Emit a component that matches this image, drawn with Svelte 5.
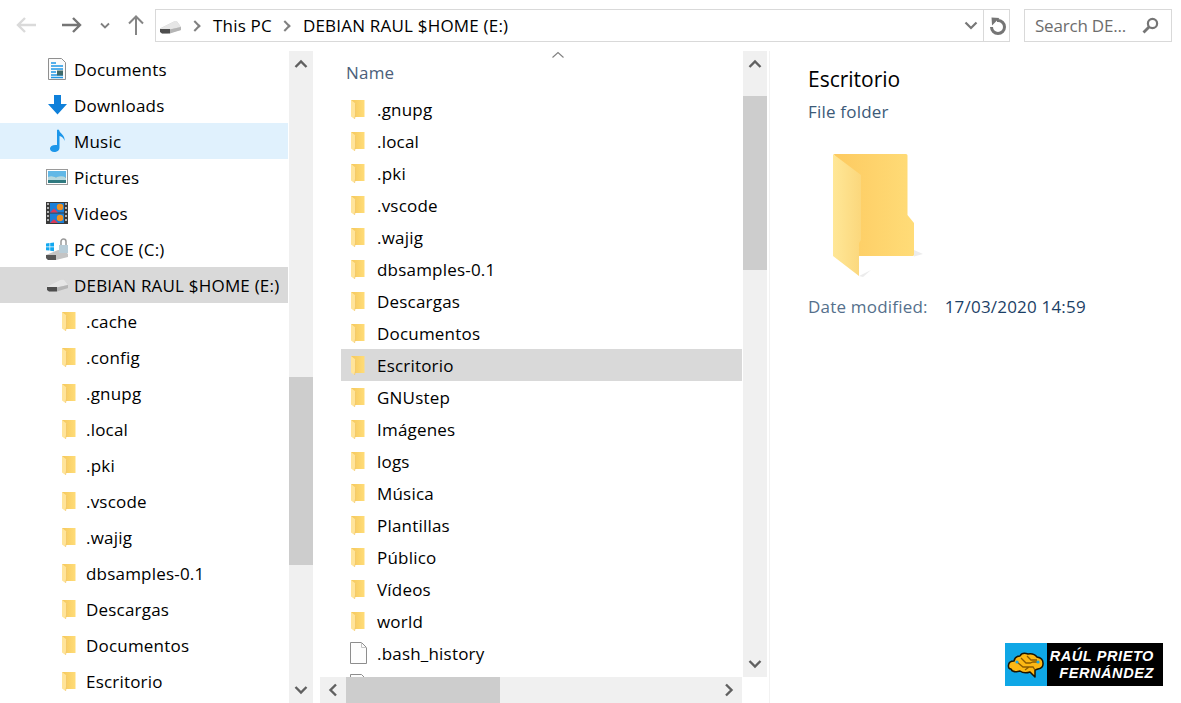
<script>
  const tree = ['.cache', '.config', '.gnupg', '.local', '.pki', '.vscode', '.wajig', 'dbsamples-0.1', 'Descargas', 'Documentos', 'Escritorio'];
  const folders = ['.gnupg', '.local', '.pki', '.vscode', '.wajig', 'dbsamples-0.1', 'Descargas', 'Documentos', 'Escritorio', 'GNUstep', 'Imágenes', 'logs', 'Música', 'Plantillas', 'Público', 'Vídeos', 'world'];
</script>

{#snippet folder()}
  <svg class="folder" width="16" height="21" viewBox="0 0 16 21">
    <defs>
      <linearGradient id="fb" x1="0" x2="1" y1="0" y2="0">
        <stop offset="0" stop-color="#f5c85c" />
        <stop offset="1" stop-color="#ffdc78" />
      </linearGradient>
    </defs>
    <path d="M1 1h13.500v17H4z" fill="url(#fb)" />
    <path d="M1 1l4.500 3.500v11.500L4.500 20 1 17.500z" fill="#ffe49a" />
    <path d="M5.500 4.500v11.500L4.500 20" fill="none" stroke="#efc05c" stroke-width=".6" />
  </svg>
{/snippet}

{#snippet chevUp()}
  <svg width="14" height="10" viewBox="0 0 14 10"><path d="M1.500 8L7 2.500 12.500 8" fill="none" stroke="#606060" stroke-width="2.400" /></svg>
{/snippet}

{#snippet chevDown()}
  <svg width="14" height="10" viewBox="0 0 14 10"><path d="M1.500 2L7 7.500 12.500 2" fill="none" stroke="#606060" stroke-width="2.400" /></svg>
{/snippet}

{#snippet drive()}
  <svg width="23" height="14" viewBox="0 0 23 14">
    <path d="M1 8.500L15 1.500h3L22 7v3L8 13.500H3L1 11z" fill="#c9c9c9" />
    <path d="M1 8.500L15 1.500h3L22 7 8 10H2z" fill="#e6e6e6" />
    <path d="M1 9h10v4.500H3L1 12z" fill="#4e4e4e" />
    <path d="M11 9.500l11-2.500v3L11 13.500z" fill="#b5b5b5" />
  </svg>
{/snippet}

<div class="window">
  <header class="toolbar">
    <div class="nav">
      <svg width="22" height="18" viewBox="0 0 22 18"><path d="M21 9H3M10 2L3 9l7 7" fill="none" stroke="#dadada" stroke-width="2.400" /></svg>
      <svg class="fwd" width="22" height="18" viewBox="0 0 22 18"><path d="M1 9h18M12 2l7 7-7 7" fill="none" stroke="#757575" stroke-width="2.400" /></svg>
      <svg class="hist" width="10" height="7" viewBox="0 0 10 7"><path d="M1 1.500l4 4 4-4" fill="none" stroke="#808080" stroke-width="1.800" /></svg>
      <svg class="up" width="18" height="22" viewBox="0 0 18 22"><path d="M9 21V3M2 9.500L9 2.500l7 7" fill="none" stroke="#858585" stroke-width="2" /></svg>
    </div>
    <div class="address">
      <span class="drive-icon">{@render drive()}</span>
      <span class="crumb-sep"></span>
      <span class="crumb">This PC</span>
      <span class="crumb-sep"></span>
      <span class="crumb">DEBIAN RAUL $HOME (E:)</span>
      <span class="addr-down">
        <svg width="14" height="9" viewBox="0 0 14 9"><path d="M1.500 1.500L7 7l5.500-5.500" fill="none" stroke="#777" stroke-width="2.200" /></svg>
      </span>
      <span class="refresh">
        <svg width="18" height="20" viewBox="0 0 18 20"><path d="M8 4.500h1a6.500 6.500 0 1 1-6.500 6.500" fill="none" stroke="#757575" stroke-width="3" /><path d="M2.500 1.500l8 .5-7.500 7.500z" fill="#757575" /></svg>
      </span>
    </div>
    <div class="search">
      <span>Search DE...</span>
      <svg width="17" height="17" viewBox="0 0 17 17"><circle cx="10.500" cy="6.500" r="4.600" fill="none" stroke="#757575" stroke-width="2.200" /><path d="M7 10l-5.500 5.500" stroke="#757575" stroke-width="2.800" /></svg>
    </div>
  </header>

  <main class="panes">
    <nav class="sidebar">
      <div class="tree">
        <div class="row">
          <svg class="icon inset" width="18" height="22" viewBox="0 0 18 22">
            <path d="M.5.500h13l4 4v17H.5z" fill="#fafafa" stroke="#8f8f8f" />
            <path d="M3 5h5M3 8h12M3 11h12M3 14h5M3 17h12M3 19.500h12" stroke="#1e96e6" stroke-width="1.300" />
            <rect x="9" y="12.500" width="6" height="5" fill="#3f6a6a" />
          </svg>
          Documents
        </div>
        <div class="row">
          <svg class="icon inset" width="19" height="20" viewBox="0 0 19 20"><path d="M6 0h7v9h6l-9.500 10.500L0 9h6z" fill="#0f80da" /></svg>
          Downloads
        </div>
        <div class="row hover">
          <svg class="icon inset" width="19" height="23" viewBox="0 0 19 23"><path d="M9 0h2c.3 4 6.500 5.500 5.500 11.500-.5-3-3-4.600-5-5V18c0 3-2.400 4.500-5.300 4.500C3.700 22.500 2 21 2 19c0-2.300 2.800-4 7-3.400z" fill="#1b96ea" /></svg>
          Music
        </div>
        <div class="row">
          <svg class="icon" width="22" height="16" viewBox="0 0 22 16">
            <rect x=".5" y=".5" width="21" height="15" fill="#fff" stroke="#9a9a9a" />
            <rect x="2" y="2" width="18" height="6" fill="#62b8e6" />
            <rect x="2" y="8" width="18" height="6" fill="#2f7a80" />
            <path d="M2 8c5-2 6 1 9 0s6-1 9 .5V11H2z" fill="#b7d8de" />
          </svg>
          Pictures
        </div>
        <div class="row">
          <svg class="icon" width="22" height="22" viewBox="0 0 22 22">
            <rect width="22" height="22" fill="#3a3a3a" />
            <rect x="4" y="1" width="14" height="9.500" fill="#1a7fd8" />
            <rect x="4" y="11.500" width="14" height="9.500" fill="#1a7fd8" />
            <circle cx="14" cy="5" r="3.200" fill="#f09020" />
            <circle cx="14" cy="16" r="3.200" fill="#f09020" />
            <path d="M4 10.500l4-4 4 4zM4 21l4-4 4 4z" fill="#d83a5a" />
            <path d="M1 2h2M1 6h2M1 10h2M1 14h2M1 18h2M19 2h2M19 6h2M19 10h2M19 14h2M19 18h2" stroke="#ddd" stroke-width="1.500" />
          </svg>
          Videos
        </div>
        <div class="row">
          <svg class="icon" width="22" height="22" viewBox="0 0 22 22">
            <path d="M0 5.500l3.500-.5v3.500H0zM4.200 4.900L8 4.400v4.100H4.200zM0 9.200h3.500v3.400L0 12.200zM4.200 9.200H8v4l-3.800-.5z" fill="#12a8f0" />
            <path d="M0 17l12-5h6l4 4v3l-12 3H2l-2-2z" fill="#c4c4c4" />
            <path d="M0 17h10v5H2l-2-2z" fill="#555" />
            <rect x="13" y="7" width="9" height="8" fill="#b8cdd8" />
            <path d="M15 7V3.500a2.500 2.500 0 0 1 5 0V7" fill="none" stroke="#9a9a9a" stroke-width="1.500" />
          </svg>
          PC COE (C:)
        </div>
        <div class="row selected">
          <span class="icon">{@render drive()}</span>
          DEBIAN RAUL $HOME (E:)
        </div>
        {#each tree as name}
          <div class="row sub">
            {@render folder()}
            {name}
          </div>
        {/each}
      </div>
      <div class="vscroll side">
        <button class="arrow">{@render chevUp()}</button>
        <div class="track"><div class="thumb"></div></div>
        <button class="arrow">{@render chevDown()}</button>
      </div>
    </nav>

    <section class="list">
      <div class="list-top">
        <div class="list-body">
          <svg class="sort" width="14" height="8" viewBox="0 0 14 8"><path d="M1.500 6.500L7 1.500l5.500 5" fill="none" stroke="#808080" stroke-width="1.100" /></svg>
          <div class="col-head">Name</div>
          {#each folders as name}
            <div class="item" class:active={name === 'Escritorio'}>
              {@render folder()}
              <span>{name}</span>
            </div>
          {/each}
          <div class="item">
            <svg class="doc" width="17" height="22" viewBox="0 0 17 22"><path d="M.5.500h11l5 5v16H.5z" fill="#fdfdfd" stroke="#8d8d8d" /><path d="M11.500.500v5h5" fill="none" stroke="#c4c4c4" /></svg>
            <span>.bash_history</span>
          </div>
          <div class="item">
            <svg class="doc" width="17" height="22" viewBox="0 0 17 22"><path d="M.5.500h11l5 5v16H.5z" fill="#fdfdfd" stroke="#8d8d8d" /></svg>
          </div>
        </div>
        <div class="vscroll main">
          <button class="arrow">{@render chevUp()}</button>
          <div class="track"><div class="thumb"></div></div>
          <button class="arrow">{@render chevDown()}</button>
        </div>
      </div>
      <div class="hscroll">
        <button class="arrow"><svg width="10" height="14" viewBox="0 0 10 14"><path d="M8 1.500L2.500 7 8 12.500" fill="none" stroke="#606060" stroke-width="2.400" /></svg></button>
        <div class="htrack"><div class="hthumb"></div></div>
        <button class="arrow"><svg width="10" height="14" viewBox="0 0 10 14"><path d="M2 1.500L7.500 7 2 12.500" fill="none" stroke="#606060" stroke-width="2.400" /></svg></button>
      </div>
    </section>

    <aside class="preview">
      <h1>Escritorio</h1>
      <p class="type">File folder</p>
      <svg class="bigfolder" width="100" height="126" viewBox="0 0 100 126">
        <defs>
          <linearGradient id="back" x1="0" x2="1" y1="0" y2="0">
            <stop offset="0" stop-color="#fdca60" />
            <stop offset="1" stop-color="#ffdc78" />
          </linearGradient>
          <linearGradient id="front" x1="0" x2="1" y1="0" y2="0">
            <stop offset="0" stop-color="#ffe797" />
            <stop offset="1" stop-color="#fbd77c" />
          </linearGradient>
        </defs>
        <path d="M83 97l9 4-9 2.500zM28 123l12-6-8 7z" fill="#ececec" />
        <path d="M3 1h72a1.500 1.500 0 0 1 1.500 1.500V62l6.500 8v31.500a1.500 1.500 0 0 1-1.500 1.500H28z" fill="url(#back)" />
        <path d="M2 1l28 21v65l-2 3v33L2 103z" fill="url(#front)" />
      </svg>
      <p class="meta"><span class="label">Date modified:</span><span class="value">17/03/2020 14:59</span></p>
    </aside>
  </main>

  <div class="brand">
    <div class="brand-mark">
      <svg width="38" height="34" viewBox="0 0 38 34">
        <path d="M1.500 17Q2 13 7 13 8 8 13 8 15 4 21 6 27 5 30 9 36 10 36 15 36.500 20 31 21L28 22 28 29 23 24Q17 26 13 23 5 25 4 21 1 21 1.500 17z" fill="#fdb814" stroke="#1c1400" stroke-width="1.500" stroke-linejoin="round" />
        <path d="M10 14l6 5h6M14 10l5 5h4l3-1h5M20 8l4 4h6M18 22l4-3h4l2 3" fill="none" stroke="#8a5a00" stroke-width="1.300" />
        <circle cx="10" cy="14" r="1.600" fill="#1aa6e4" />
        <circle cx="31" cy="14" r="1.600" fill="#1aa6e4" />
      </svg>
    </div>
    <div class="brand-name">
      <span>RAÚL PRIETO</span>
      <span>FERNÁNDEZ</span>
    </div>
  </div>
</div>

<style>
  :global(body) {
    margin: 0;
    background: #fff;
  }
  .window {
    position: relative;
    width: 1181px;
    height: 703px;
    overflow: hidden;
    display: flex;
    flex-direction: column;
    font-family: "Open Sans", "Noto Sans", sans-serif;
    font-size: 17px;
    letter-spacing: 0.2px;
    color: #000;
    background: #fff;
  }

  .toolbar {
    height: 51px;
    flex: none;
    display: flex;
    padding: 9px 9px 0 15px;
    box-sizing: border-box;
    align-items: flex-start;
  }
  .nav {
    width: 140px;
    height: 32px;
    display: flex;
    align-items: center;
  }
  .fwd { margin-left: 24px; }
  .hist { margin-left: 17px; }
  .up { margin-left: 17px; }
  .address {
    width: 855px;
    height: 33px;
    box-sizing: border-box;
    border: 1px solid #d9d9d9;
    display: flex;
    align-items: center;
    padding-left: 3px;
  }
  .drive-icon { display: flex; margin-top: 3px; }
  .crumb-sep {
    width: 6px;
    height: 6px;
    margin: 0 15px 0 9px;
    border-top: 2px solid #808080;
    border-right: 2px solid #808080;
    transform: rotate(45deg);
  }
  .crumb-sep + .crumb { margin-left: -1px; }
  .crumb { white-space: nowrap; }
  .addr-down {
    margin-left: auto;
    width: 24px;
    height: 31px;
    display: flex;
    align-items: center;
    justify-content: center;
  }
  .refresh {
    width: 26px;
    height: 31px;
    box-sizing: border-box;
    padding-left: 3px;
    border-left: 1px solid #d9d9d9;
    display: flex;
    align-items: center;
    justify-content: center;
  }
  .search {
    margin-left: 14px;
    width: 148px;
    height: 33px;
    box-sizing: border-box;
    border: 1px solid #d9d9d9;
    display: flex;
    align-items: center;
    justify-content: space-between;
    padding: 0 12px 0 10px;
    color: #6d6d6d;
    letter-spacing: -0.2px;
  }

  .panes {
    flex: 1;
    display: flex;
    min-height: 0;
  }

  .sidebar {
    width: 314px;
    flex: none;
    display: flex;
  }
  .tree {
    width: 288px;
    flex: none;
    margin-right: 1px;
    overflow: hidden;
  }
  .row {
    height: 36px;
    display: flex;
    align-items: center;
    padding-left: 74px;
    position: relative;
    white-space: nowrap;
  }
  .row .icon {
    position: absolute;
    left: 46px;
    top: 50%;
    transform: translateY(-50%);
    display: flex;
  }
  .row .icon.inset { left: 48px; }
  .row.hover { background: #e0f1fd; }
  .row.selected { background: #d9d9d9; }
  .row.sub {
    padding-left: 61px;
    gap: 9px;
  }

  .vscroll {
    width: 24px;
    flex: none;
    display: flex;
    flex-direction: column;
    background: #f0f0f0;
  }
  .arrow {
    padding: 0;
    border: 0;
    background: none;
    flex: none;
    width: 24px;
    height: 26px;
    display: flex;
    align-items: center;
    justify-content: center;
  }
  .track { flex: 1; }
  .thumb { background: #cdcdcd; }
  .side .track { padding-top: 300px; }
  .side .thumb { height: 188px; }
  .main .track { padding-top: 19px; }
  .main .thumb { height: 174px; }

  .list {
    width: 447px;
    margin-left: 6px;
    flex: none;
    display: flex;
    flex-direction: column;
  }
  .list-top {
    flex: 1;
    min-height: 0;
    display: flex;
  }
  .list-body {
    width: 423px;
    flex: none;
    position: relative;
    overflow: hidden;
  }
  .sort {
    position: absolute;
    left: 231px;
    top: 0;
  }
  .col-head {
    height: 42px;
    display: flex;
    align-items: center;
    padding: 0 0 0 26px;
    color: #4c607a;
  }
  .item {
    height: 32px;
    margin: 0 1px 0 21px;
    display: flex;
    align-items: center;
    padding-left: 9px;
    gap: 11px;
    white-space: nowrap;
  }
  .item.active { background: #d9d9d9; }
  .item .doc { margin-right: -1px; }

  .hscroll {
    height: 26px;
    width: 422px;
    flex: none;
    display: flex;
    background: #f0f0f0;
  }
  .hscroll .arrow { width: 26px; }
  .htrack { flex: 1; }
  .hthumb {
    width: 154px;
    height: 100%;
    background: #cdcdcd;
  }

  .preview {
    flex: 1;
    border-left: 1px solid #f2f2f2;
    margin-left: 2px;
    padding: 13px 0 0 38px;
  }
  h1 {
    margin: 0;
    font-size: 21px;
    font-weight: 400;
    line-height: 30px;
    letter-spacing: 0;
  }
  .type {
    margin: 6px 0 0;
    line-height: 24px;
    color: #3c5a78;
  }
  .bigfolder {
    display: block;
    margin: 29px 0 0 23px;
  }
  .meta {
    margin: 16px 0 0;
    display: flex;
    gap: 17px;
    line-height: 24px;
  }
  .label { color: #55708c; }
  .value { color: #1c3f66; }

  .brand {
    position: absolute;
    left: 1005px;
    top: 643px;
    width: 158px;
    height: 43px;
    background: #000;
    display: flex;
  }
  .brand-mark {
    width: 42px;
    background: #0fa7e6;
    display: flex;
    align-items: center;
    justify-content: center;
  }
  .brand-name {
    flex: 1;
    display: flex;
    flex-direction: column;
    align-items: flex-end;
    justify-content: center;
    padding-right: 9px;
    font-family: "Liberation Sans", Arial, sans-serif;
    font-size: 14.5px;
    font-weight: 700;
    font-style: italic;
    line-height: 17px;
    letter-spacing: 0.6px;
    color: #fff;
  }
</style>
